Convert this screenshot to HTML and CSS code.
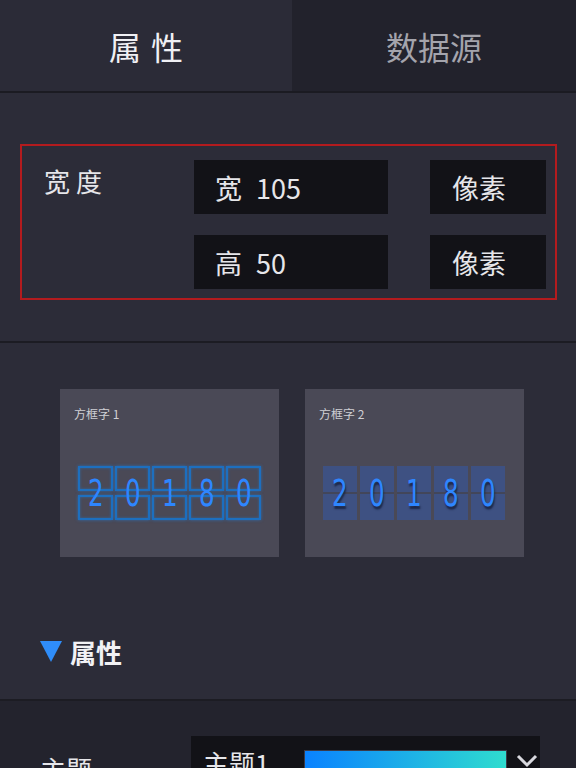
FILE: index.html
```html
<!DOCTYPE HTML>
<html lang="zh">

<head>
    <title>属性</title>
    <meta charset="utf-8">
    <meta name="viewport" content="width=device-width, initial-scale=1">
    <link rel="stylesheet" href="styles.css">
</head>

<body>
    <div class="tabs">
        <div class="tab active">属性</div>
        <div class="tab">数据源</div>
    </div>

    <div class="size-section">
        <div class="size-box">
            <div class="size-label">宽度</div>
            <div class="field"><span class="field-key">宽</span>105</div>
            <div class="unit">像素</div>
            <div class="field"><span class="field-key">高</span>50</div>
            <div class="unit">像素</div>
        </div>
    </div>

    <div class="styles">
        <div class="card">
            <div class="card-title">方框字 1</div>
            <div class="digits outline">
                <div class="digit"><span>2</span></div>
                <div class="digit"><span>0</span></div>
                <div class="digit"><span>1</span></div>
                <div class="digit"><span>8</span></div>
                <div class="digit"><span>0</span></div>
            </div>
        </div>
        <div class="card">
            <div class="card-title">方框字 2</div>
            <div class="digits filled">
                <div class="digit"><span>2</span></div>
                <div class="digit"><span>0</span></div>
                <div class="digit"><span>1</span></div>
                <div class="digit"><span>8</span></div>
                <div class="digit"><span>0</span></div>
            </div>
        </div>
    </div>

    <div class="group-title"><span class="caret"></span>属性</div>

    <div class="props">
        <div class="prop-row">
            <div class="prop-label">主题</div>
            <div class="select">
                <span class="select-text">主题1</span>
                <span class="swatch"></span>
                <svg class="chevron" width="22" height="14" viewBox="0 0 22 14">
                    <path d="M2 2 L11 11 L20 2" fill="none" stroke="#d8d8de" stroke-width="3"/>
                </svg>
            </div>
        </div>
    </div>
</body>

</html>
```

FILE: styles.css
```css
body {
    margin: 0;
    background-color: #2c2c38;
    font-family: "Noto Sans CJK SC", "Noto Sans", sans-serif;
    color: #e6e6ea;
    height: 768px;
    overflow: hidden;
}

.tabs {
    display: flex;
    height: 91px;
    border-bottom: 2px solid #1b1b22;
}

.tab {
    flex: 1;
    display: flex;
    align-items: center;
    justify-content: center;
    font-size: 32px;
    color: #a4a4ac;
    background: #22222c;
}

.tab.active {
    flex: 0 0 292px;
    color: #f0f0f4;
    background: #2b2b37;
    letter-spacing: 10px;
    padding-left: 10px;
    box-sizing: border-box;
}

.size-section {
    padding: 51px 19px 41px 20px;
    border-bottom: 2px solid #1c1c23;
}

.size-box {
    border: 2px solid #b31b1e;
    height: 156px;
    box-sizing: border-box;
    padding: 14px 9px 0 22px;
    display: grid;
    grid-template-columns: 150px 194px 1fr;
    grid-template-rows: 54px 54px;
    row-gap: 21px;
}

.size-label {
    grid-row: 1 / 3;
    font-size: 26px;
    letter-spacing: 6px;
    line-height: 1;
    padding-top: 8px;
}

.field,
.unit {
    background: #121217;
    font-size: 27px;
    display: flex;
    align-items: center;
}

.field {
    grid-column: 2;
    padding-left: 21px;
}

.field-key {
    margin-right: 14px;
}

.unit {
    grid-column: 3;
    margin-left: 42px;
    padding-left: 22px;
}

.styles {
    display: flex;
    gap: 26px;
    padding: 46px 0 0 60px;
    height: 214px;
}

.card {
    width: 219px;
    height: 168px;
    background: #4a4956;
    box-sizing: border-box;
    padding: 18px 0 0 14px;
}

.card-title {
    font-size: 12px;
    color: #cfcfd4;
    line-height: 14px;
}

.digits {
    display: flex;
    gap: 2px;
    margin-top: 45px;
    margin-left: 4px;
}

.digits.filled {
    gap: 3px;
}

.digit {
    width: 35px;
    height: 54px;
    position: relative;
    display: flex;
    align-items: center;
    justify-content: center;
}

.outline .digit::before,
.outline .digit::after {
    content: "";
    position: absolute;
    left: 0;
    right: 0;
    height: 25px;
    border: 2px solid #1d6fbf;
    box-sizing: border-box;
    box-shadow: 0 0 3px rgba(30, 130, 230, 0.6), inset 0 0 3px rgba(30, 130, 230, 0.5);
}

.outline .digit::before {
    top: 0;
}

.outline .digit::after {
    bottom: 0;
}

.filled .digit {
    background: #3e5182;
    width: 34px;
}

.filled .digit::after {
    content: "";
    position: absolute;
    left: 0;
    right: 0;
    top: 26px;
    height: 2px;
    background: #42465a;
}

.digit span {
    position: relative;
    z-index: 1;
    font-family: "Liberation Sans Narrow", "DejaVu Sans Condensed", sans-serif;
    font-size: 38px;
    line-height: 1;
    color: #2e86ff;
    display: inline-block;
    transform: scaleX(0.72);
}

.filled .digit span {
    text-shadow: 1px 3px 2px rgba(20, 30, 60, 0.8);
}

.group-title {
    display: flex;
    align-items: center;
    padding-left: 40px;
    height: 98px;
    font-size: 26px;
    font-weight: bold;
    color: #f2f2f5;
    border-bottom: 2px solid #1c1c23;
    box-sizing: border-box;
    padding-top: 24px;
    padding-bottom: 24px;
}

.caret {
    width: 0;
    height: 0;
    border-left: 11px solid transparent;
    border-right: 11px solid transparent;
    border-top: 21px solid #2f8dfa;
    margin-right: 8px;
}

.props {
    background: #23232d;
    padding: 35px 36px 0 40px;
    height: 67px;
    box-sizing: border-box;
    overflow: hidden;
}

.prop-row {
    display: flex;
    align-items: flex-start;
}

.prop-label {
    width: 153px;
    font-size: 26px;
    padding-top: 14px;
}

.select {
    flex: 1;
    height: 60px;
    background: #121217;
    display: flex;
    align-items: flex-start;
    padding: 14px 2px 0 12px;
    box-sizing: border-box;
}

.select-text {
    font-size: 26px;
    line-height: 1;
    width: 101px;
}

.swatch {
    width: 203px;
    height: 40px;
    background: linear-gradient(to right, #0a82ff, #2fdccf);
    border: 1px solid #3a3a48;
    box-sizing: border-box;
}

.chevron {
    margin: 4px 0 0 9px;
}
```
